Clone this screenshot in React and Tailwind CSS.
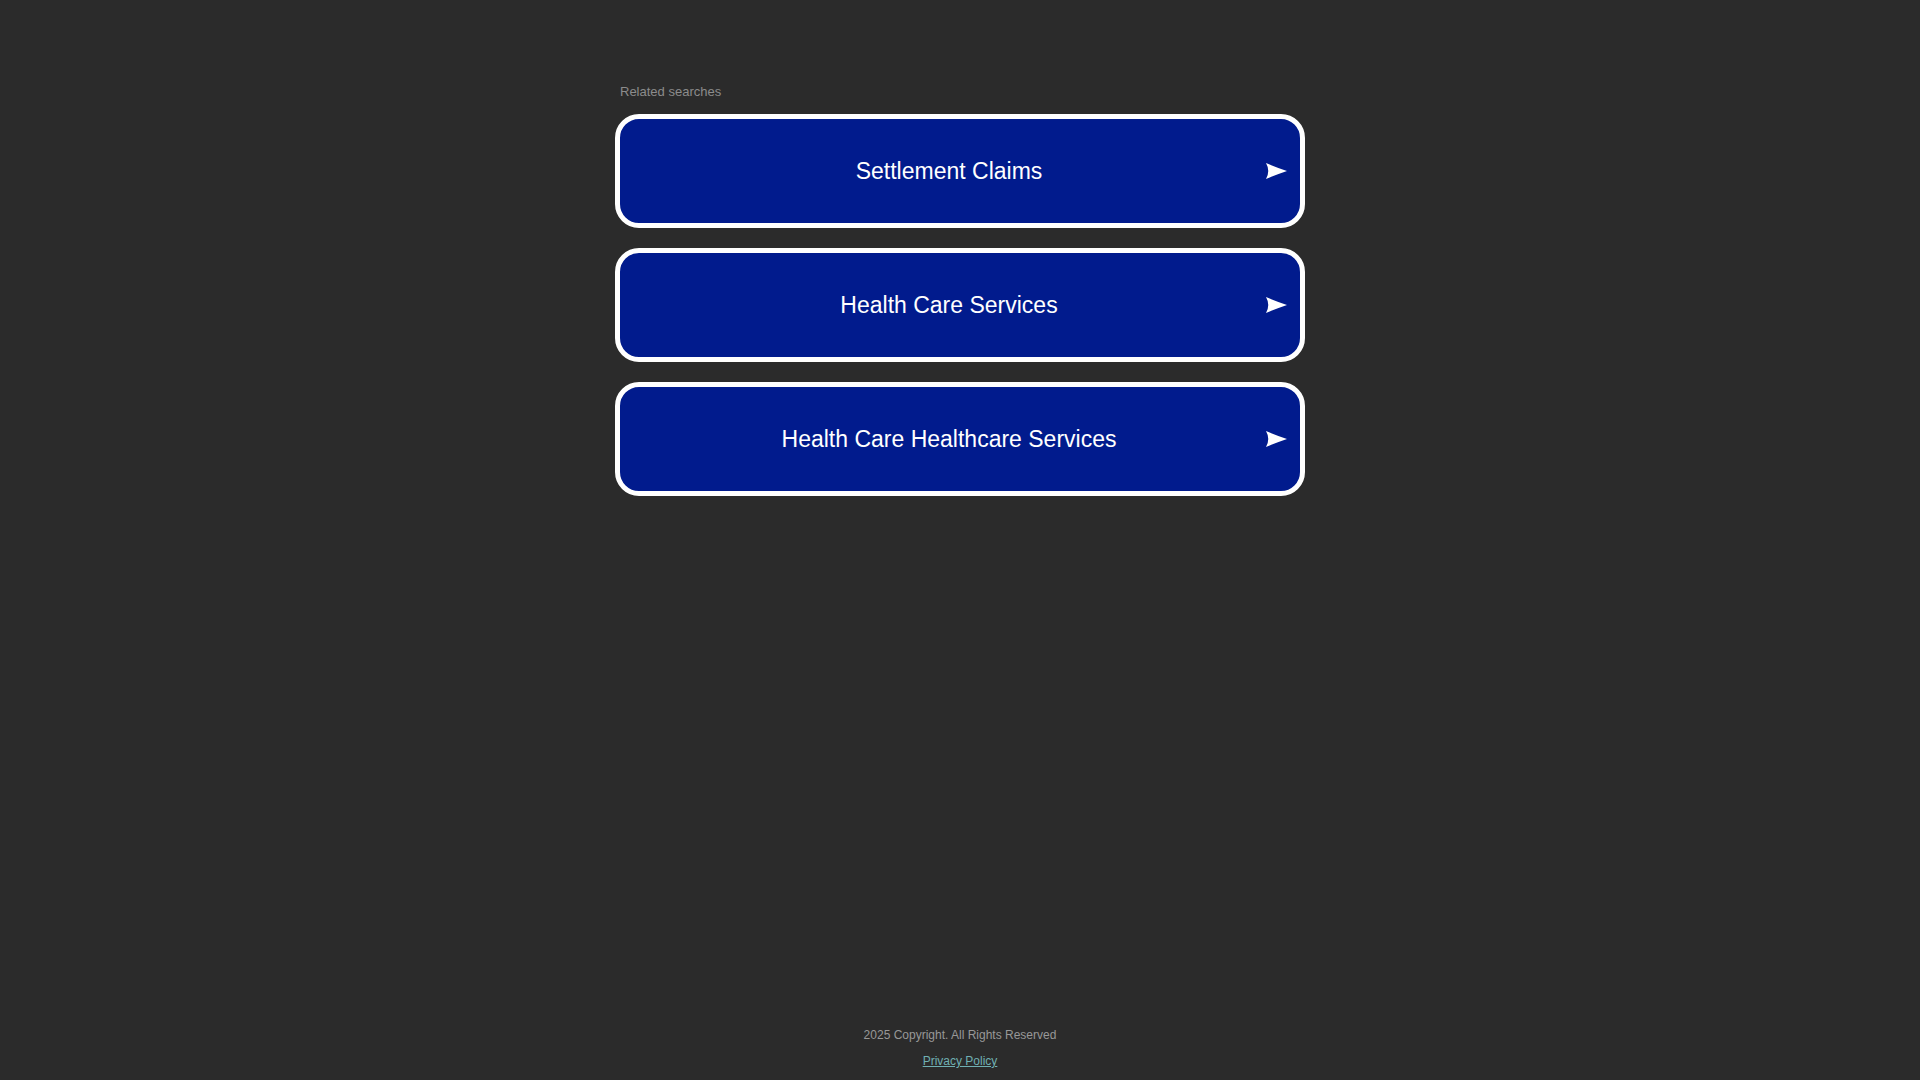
const links = ["Settlement Claims", "Health Care Services", "Health Care Healthcare Services"]

function Arrow() {
  return (
    <svg width="21" height="16" viewBox="0 0 21 16" className="shrink-0">
      <path d="M0 0 Q12 5 21 8 Q12 11 0 16 Q4.5 8 0 0 Z" fill="#fff" />
    </svg>
  )
}

export default function App() {
  return (
    <div className="h-screen bg-[#2b2b2b] flex flex-col font-['Liberation_Sans',Arial,sans-serif]">
      {/* Related searches */}
      <div className="w-[690px] mx-auto pt-[84px]">
        <p className="pl-[5px] text-[13px] leading-[16px] text-[#8c8c8c] mb-[14px]">Related searches</p>
        <div className="flex flex-col gap-[20px]">
          {links.map(label => (
            <a key={label} href="#" className="h-[114px] flex items-center bg-[#011b8d] border-[5px] border-white rounded-[24px] pl-[12px] pr-[13px] text-white">
              <span className="flex-1 text-center text-[23px] leading-[28px]">{label}</span>
              <Arrow />
            </a>
          ))}
        </div>
      </div>

      {/* Footer */}
      <div className="mt-auto pb-[11px] flex flex-col items-center gap-[10px] text-[12px] leading-[16px]">
        <p className="text-[#989898]">2025 Copyright. All Rights Reserved</p>
        <a href="#" className="text-[#70b0b3] underline">Privacy Policy</a>
      </div>
    </div>
  )
}
